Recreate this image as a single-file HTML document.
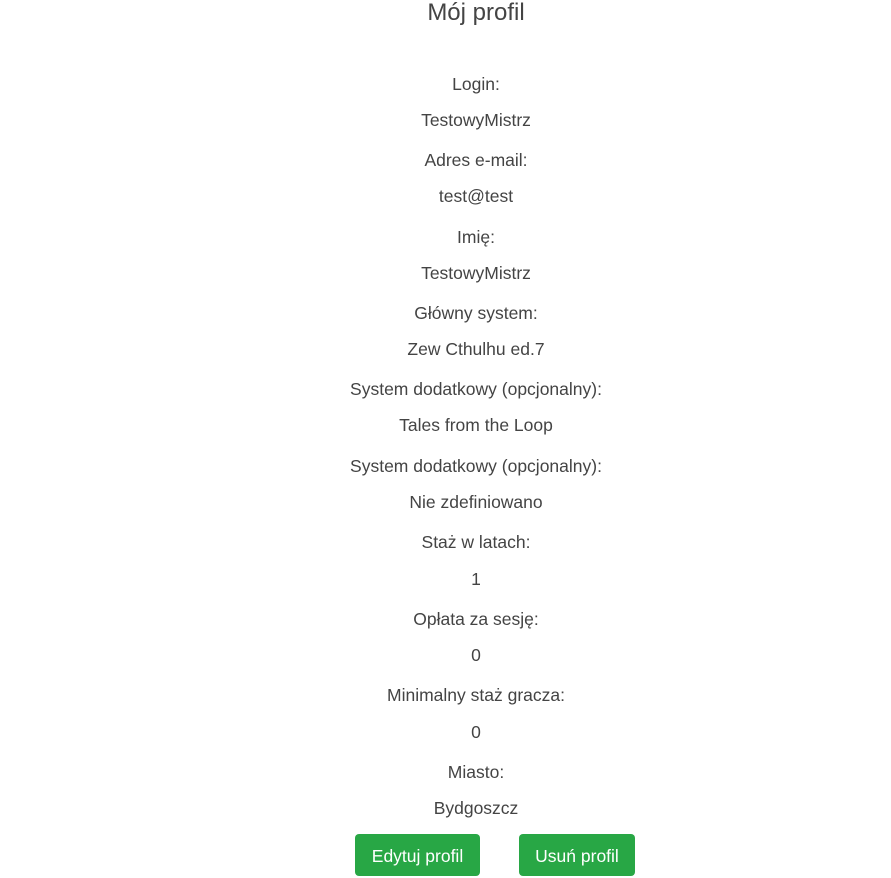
<!DOCTYPE html>
<html><head><meta charset="utf-8"><style>
body{margin:0;width:891px;height:873px;overflow:hidden;background:#fff;font-family:"Liberation Sans",sans-serif;color:#444;position:relative}
.t{position:absolute;left:0;width:952px;text-align:center;font-size:17.5px;line-height:20px;white-space:nowrap}
h1{position:absolute;left:0;width:952px;top:-2px;margin:0;text-align:center;font-weight:normal;font-size:24px;line-height:30px;color:#444}
.b{position:absolute;top:834px;height:42px;background:#28a745;color:#fff;border-radius:4px;font-size:17.5px;line-height:44px;text-align:center}
</style></head><body>
<h1>Mój profil</h1>
<div class="t" style="top:74px">Login:</div>
<div class="t" style="top:110px">TestowyMistrz</div>
<div class="t" style="top:150px">Adres e-mail:</div>
<div class="t" style="top:186px">test@test</div>
<div class="t" style="top:227px">Imię:</div>
<div class="t" style="top:263px">TestowyMistrz</div>
<div class="t" style="top:303px">Główny system:</div>
<div class="t" style="top:339px">Zew Cthulhu ed.7</div>
<div class="t" style="top:379px">System dodatkowy (opcjonalny):</div>
<div class="t" style="top:415px">Tales from the Loop</div>
<div class="t" style="top:456px">System dodatkowy (opcjonalny):</div>
<div class="t" style="top:492px">Nie zdefiniowano</div>
<div class="t" style="top:532px">Staż w latach:</div>
<div class="t" style="top:569px">1</div>
<div class="t" style="top:609px">Opłata za sesję:</div>
<div class="t" style="top:645px">0</div>
<div class="t" style="top:685px">Minimalny staż gracza:</div>
<div class="t" style="top:722px">0</div>
<div class="t" style="top:762px">Miasto:</div>
<div class="t" style="top:798px">Bydgoszcz</div>
<div class="b" style="left:355px;width:125px">Edytuj profil</div>
<div class="b" style="left:519px;width:116px">Usuń profil</div>
</body></html>
